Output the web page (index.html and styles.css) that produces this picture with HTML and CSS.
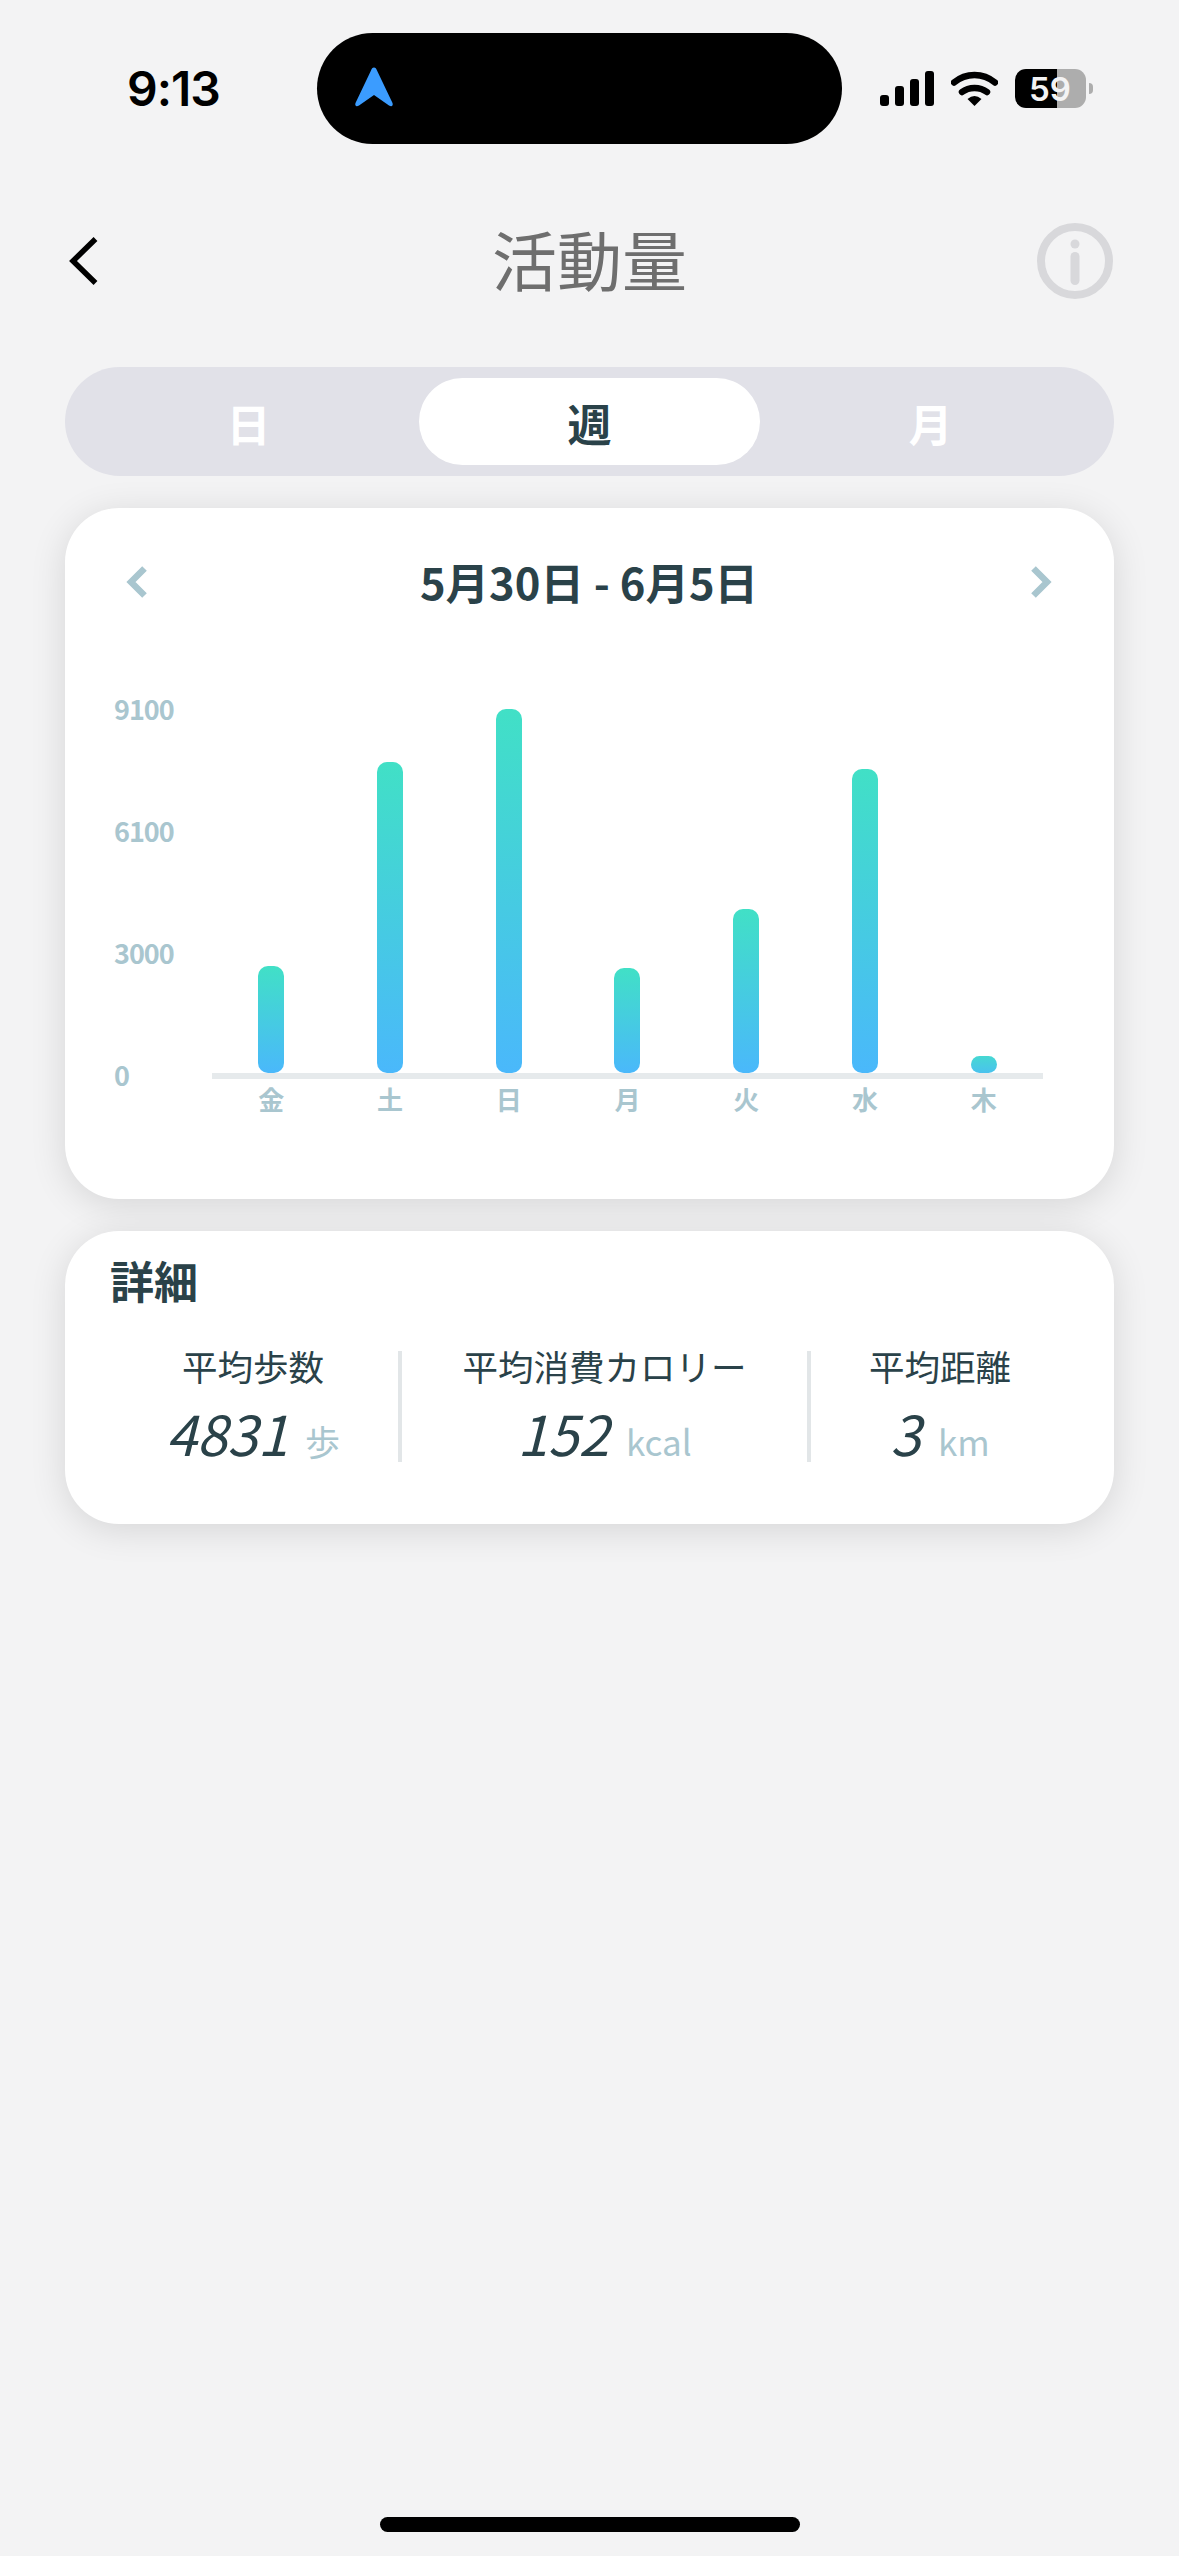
FILE: index.html
```html
<!DOCTYPE html>
<html lang="ja">
<head>
    <meta charset="UTF-8">
    <meta name="viewport" content="width=device-width, initial-scale=1.0">
    <title>活動量</title>
    <link rel="stylesheet" href="styles.css">
</head>
<body>
    <div class="status-bar">
        <div class="status-time">9:13</div>
        <div class="island">
            <svg class="island-arrow" viewBox="0 0 40 40">
                <path d="M20 0.5 C21.5 0.5 22.3 1.5 23 3.5 L38.5 36 C39.5 39 37.5 40 35 38.5 L20 28 L5 38.5 C2.5 40 0.5 39 1.5 36 L17 3.5 C17.7 1.5 18.5 0.5 20 0.5 Z" fill="#3b9cff"/>
            </svg>
        </div>
        <div class="status-icons">
            <div class="signal">
                <span class="signal-bar signal-1"></span>
                <span class="signal-bar signal-2"></span>
                <span class="signal-bar signal-3"></span>
                <span class="signal-bar signal-4"></span>
            </div>
            <svg class="wifi" viewBox="0 0 47 35">
                <path d="M3 11.5 C15 1.5 32 1.5 44 11.5" fill="none" stroke="#000" stroke-width="6.5" stroke-linecap="round"/>
                <path d="M11 21 C18 15.5 29 15.5 36 21" fill="none" stroke="#000" stroke-width="6.5" stroke-linecap="round"/>
                <path d="M16.5 28 Q23.5 22 30.5 28 L23.5 35 Z" fill="#000"/>
            </svg>
            <div class="battery"><span class="battery-text">59</span></div>
            <div class="battery-cap"></div>
        </div>
    </div>

    <div class="nav">
        <svg class="back-icon" viewBox="0 0 34 52">
            <path d="M29.5 4 L7 26 L29.5 48" fill="none" stroke="#000" stroke-width="5.5"/>
        </svg>
        <h1 class="nav-title">活動量</h1>
        <svg class="info-icon" viewBox="0 0 76 76">
            <circle cx="38" cy="38" r="34" fill="none" stroke="#d8d8db" stroke-width="8"/>
            <circle cx="38" cy="21" r="4.5" fill="#d8d8db"/>
            <rect x="33.5" y="29" width="9" height="33" rx="4.5" fill="#d8d8db"/>
        </svg>
    </div>

    <div class="segment">
        <div class="segment-item">日</div>
        <div class="segment-item active">週</div>
        <div class="segment-item">月</div>
    </div>

    <div class="card chart-card">
        <div class="date-row">
            <svg class="date-arrow" viewBox="0 0 22 34">
                <path d="M18.5 3.5 L5 17 L18.5 30.5" fill="none" stroke="#a9c6cf" stroke-width="6.5"/>
            </svg>
            <div class="date-title">5月30日 - 6月5日</div>
            <svg class="date-arrow" viewBox="0 0 22 34">
                <path d="M3.5 3.5 L17 17 L3.5 30.5" fill="none" stroke="#a9c6cf" stroke-width="6.5"/>
            </svg>
        </div>
        <div class="chart">
            <div class="y-axis">
                <span>9100</span>
                <span>6100</span>
                <span>3000</span>
                <span>0</span>
            </div>
            <div class="plot">
                <div class="bars">
                    <div class="bar-col"><div class="bar" style="height: 107px"></div></div>
                    <div class="bar-col"><div class="bar" style="height: 311px"></div></div>
                    <div class="bar-col"><div class="bar" style="height: 364px"></div></div>
                    <div class="bar-col"><div class="bar" style="height: 105px"></div></div>
                    <div class="bar-col"><div class="bar" style="height: 164px"></div></div>
                    <div class="bar-col"><div class="bar" style="height: 304px"></div></div>
                    <div class="bar-col"><div class="bar bar-small" style="height: 17px"></div></div>
                </div>
                <div class="days">
                    <span>金</span>
                    <span>土</span>
                    <span>日</span>
                    <span>月</span>
                    <span>火</span>
                    <span>水</span>
                    <span>木</span>
                </div>
            </div>
        </div>
    </div>

    <div class="card detail-card">
        <h2 class="detail-title">詳細</h2>
        <div class="stats">
            <div class="stat">
                <div class="stat-label">平均歩数</div>
                <div class="stat-value"><span class="stat-number">4831</span><span class="stat-unit">歩</span></div>
            </div>
            <div class="stat">
                <div class="stat-label">平均消費カロリー</div>
                <div class="stat-value"><span class="stat-number">152</span><span class="stat-unit">kcal</span></div>
            </div>
            <div class="stat">
                <div class="stat-label">平均距離</div>
                <div class="stat-value"><span class="stat-number">3</span><span class="stat-unit">km</span></div>
            </div>
        </div>
    </div>

    <div class="home-indicator"></div>
</body>
</html>
```

FILE: styles.css
```css
* {
    box-sizing: border-box;
}

html, body {
    margin: 0;
    padding: 0;
}

body {
    width: 1179px;
    height: 2556px;
    overflow: hidden;
    display: flex;
    flex-direction: column;
    background-color: #f3f3f4;
    font-family: "Noto Sans CJK JP", "Noto Sans", sans-serif;
    color: #2a4249;
}

/* status bar */
.status-bar {
    display: grid;
    grid-template-columns: 317px 525px 1fr;
    align-items: center;
    margin-top: 33px;
    height: 111px;
}

.status-time {
    padding-left: 127px;
    font-family: "Inter", "Liberation Sans", sans-serif;
    font-size: 48px;
    font-weight: 600;
    letter-spacing: -1px;
    color: #000;
}

.island {
    display: flex;
    align-items: center;
    height: 111px;
    padding-left: 37px;
    background-color: #000;
    border-radius: 56px;
}

.island-arrow {
    width: 40px;
    height: 40px;
    margin-bottom: 4px;
}

.status-icons {
    display: flex;
    align-items: center;
    padding-left: 38px;
}

.signal {
    display: flex;
    align-items: flex-end;
    gap: 6px;
    height: 35px;
}

.signal-bar {
    width: 9px;
    background-color: #000;
    border-radius: 3px;
}

.signal-1 { height: 11px; }
.signal-2 { height: 20px; }
.signal-3 { height: 27px; }
.signal-4 { height: 35px; }

.wifi {
    width: 47px;
    height: 35px;
    margin-left: 17px;
}

.battery {
    display: flex;
    align-items: center;
    justify-content: center;
    width: 71px;
    height: 39px;
    margin-left: 17px;
    border-radius: 11px;
    background: linear-gradient(to right, #000 59%, #adadad 59%);
}

.battery-text {
    font-family: "Inter", "Liberation Sans", sans-serif;
    font-size: 33px;
    font-weight: 600;
    color: #f3f3f4;
    margin-right: 1px;
}

.battery-cap {
    width: 4px;
    height: 11px;
    margin-left: 3px;
    background-color: #adadad;
    border-radius: 0 4px 4px 0;
}

/* nav */
.nav {
    display: grid;
    grid-template-columns: 1fr auto 1fr;
    align-items: center;
    margin-top: 79px;
    padding: 0 66px;
}

.back-icon {
    width: 34px;
    height: 52px;
}

.nav-title {
    margin: -3px 0 3px 0;
    font-size: 65px;
    font-weight: 400;
    line-height: 76px;
    color: #6e6e6e;
}

.info-icon {
    width: 76px;
    height: 76px;
    justify-self: end;
}

/* segment */
.segment {
    display: grid;
    grid-template-columns: repeat(3, 341px);
    margin: 68px 65px 0 65px;
    padding: 11px 13px;
    height: 109px;
    background-color: #e1e1e8;
    border-radius: 55px;
}

.segment-item {
    display: flex;
    align-items: center;
    justify-content: center;
    padding-top: 2px;
    font-size: 44px;
    font-weight: 700;
    color: #fff;
    border-radius: 44px;
}

.segment-item.active {
    background-color: #fff;
    color: #2a4249;
}

/* cards */
.card {
    margin: 32px 65px 0 65px;
    background-color: #fff;
    border-radius: 54px;
    box-shadow: 0 6px 36px rgba(0, 0, 0, 0.12);
}

.chart-card {
    padding: 47px 71px 85px 49px;
}

.date-row {
    display: flex;
    align-items: center;
    justify-content: space-between;
    height: 60px;
    margin-left: 12px;
    margin-right: -9px;
}

.date-arrow {
    width: 22px;
    height: 34px;
    margin-top: -6px;
}

.date-title {
    margin-top: -6px;
    font-size: 43.5px;
    font-weight: 700;
    line-height: 60px;
}

.chart {
    display: grid;
    grid-template-columns: 98px 1fr;
    align-items: start;
    margin-top: 74px;
}

.y-axis {
    display: flex;
    flex-direction: column;
    justify-content: space-between;
    height: 406px;
    font-size: 27px;
    font-weight: 700;
    letter-spacing: -1px;
    line-height: 40px;
    color: #a9c6cf;
}

.plot {
    padding-top: 20px;
}

.bars {
    display: grid;
    grid-template-columns: repeat(7, 1fr);
    align-items: end;
    height: 370px;
    border-bottom: 6px solid #e6eaec;
}

.bar-col {
    display: flex;
    justify-content: center;
}

.bar {
    width: 26px;
    background: linear-gradient(to bottom, #41e0c6, #4ab8fb);
    border-radius: 10px;
}

.bar-small {
    background: linear-gradient(to bottom, #46d8d2, #4ac2ee);
    border-radius: 9px;
}

.days {
    display: grid;
    grid-template-columns: repeat(7, 1fr);
    margin-top: 5px;
    font-size: 26px;
    font-weight: 700;
    line-height: 30px;
    text-align: center;
    color: #a9c6cf;
}

.detail-card {
    padding: 19px 0 62px 0;
}

.detail-title {
    margin: 0 0 41px 45px;
    font-size: 44px;
    font-weight: 700;
    line-height: 60px;
}

.stats {
    display: grid;
    grid-template-columns: 290px 409px 1fr;
    padding: 0 45px 0 43px;
}

.stat {
    display: flex;
    flex-direction: column;
    align-items: center;
    height: 111px;
    border-left: 4px solid #e2e6e8;
}

.stat:first-child {
    border-left: none;
}

.stat-label {
    margin-top: -3px;
    font-size: 35.5px;
    font-weight: 400;
    line-height: 36px;
}

.stat-value {
    display: flex;
    align-items: baseline;
    gap: 17px;
    margin-top: 18px;
    line-height: 60px;
}

.stat-number {
    font-size: 55px;
    font-weight: 400;
    font-style: italic;
}

.stat-unit {
    font-size: 35px;
    font-weight: 400;
    color: #a9c6cf;
}

.home-indicator {
    width: 420px;
    height: 15px;
    margin: auto auto 24px auto;
    background-color: #000;
    border-radius: 8px;
}
```
